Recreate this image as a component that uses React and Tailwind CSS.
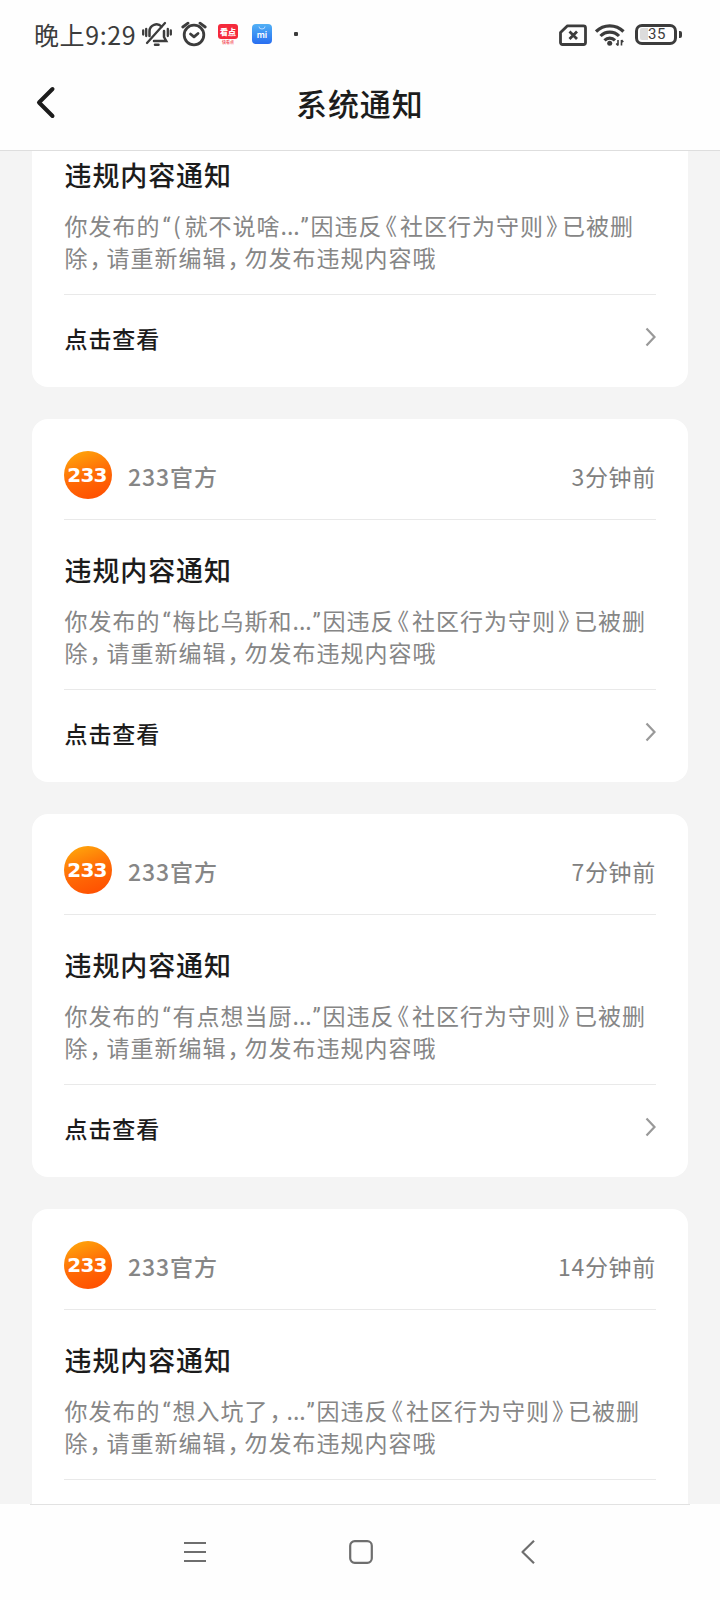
import React from "react";

const notices = [
  { id: 1, time: "1分钟前", quote: "(就不说啥" },
  { id: 2, time: "3分钟前", quote: "梅比乌斯和" },
  { id: 3, time: "7分钟前", quote: "有点想当厨" },
  { id: 4, time: "14分钟前", quote: "想入坑了，" },
];

// narrow widths for punctuation, full-width glyphs are too loose
const punctuation = {
  "“": "inline-block w-[12px] text-center font-['Roboto'] leading-none tracking-normal",
  "”": "inline-block w-[12px] text-center font-['Roboto'] leading-none tracking-normal",
  "(": "inline-block w-[12px] pr-[3px] text-center leading-none tracking-normal",
  "…": "inline-block w-[18px] text-center leading-none tracking-normal",
  "《": "ml-[3px] mr-[2px] [font-feature-settings:'halt']",
  "》": "ml-[2px] mr-[3.5px] [font-feature-settings:'halt']",
  "，": "ml-[1px] mr-[4.5px] [font-feature-settings:'halt']",
};

function Line({ text }) {
  return (
    <p className="h-8 whitespace-nowrap">
      {Array.from(text).map((ch, idx) =>
        punctuation[ch] ? (
          <span key={idx} className={punctuation[ch]}>
            {ch === "…" ? "..." : ch}
          </span>
        ) : (
          ch
        )
      )}
    </p>
  );
}

function StatusBar() {
  return (
    <div className="flex h-[68px] items-center pl-[34px] pr-[38px] text-[#3c3c3c]">
      <span className="w-[108px] whitespace-nowrap text-[25px] leading-[36px] tracking-[0.6px]">晚上9:29</span>

      {/* Muted bell */}
      <svg className="h-[26px] w-[30px]" viewBox="0 0 30 26" fill="none" stroke="currentColor" strokeWidth="2.5" strokeLinecap="round">
        <path d="M7.500 15V10a7 7 0 0 1 12-4.500M22 10v6l2.200 4H12" />
        <path d="M23 2 5 22M1.200 9.500v4M4.200 8v7M25.800 8v7M28.800 9.500v4" strokeWidth="2.300" />
        <path d="M13 23.800h3.500" strokeWidth="2.500" />
      </svg>

      {/* Alarm */}
      <svg className="ml-[9px] h-[26px] w-[26px]" viewBox="0 0 26 26" fill="none" stroke="currentColor" strokeWidth="2.800" strokeLinecap="round" strokeLinejoin="round">
        <circle cx="13" cy="14" r="9.800" />
        <path d="M9.500 13 13 15.800l4-3.300" />
        <path d="M1.800 6 7 2.200M24.200 6 19 2.200" />
      </svg>

      <div className="ml-[11px] flex h-5 w-5 flex-col items-center">
        <span className="flex h-[15px] w-5 items-center justify-center rounded-[3px] bg-[#f52a3c] text-[8px] font-black leading-none text-white">看点</span>
        <span className="mt-[1px] text-[4px] font-bold leading-[4px] text-[#f5606c]">快看点</span>
      </div>

      <div className="ml-[14px] flex h-5 w-5 flex-col items-center rounded-[4px] bg-linear-to-b from-[#52b0f5] to-[#2a6df0]">
        <svg className="mt-[2px] h-[4px] w-[8px]" viewBox="0 0 8 4" fill="none" stroke="#b9dcff" strokeWidth="1">
          <path d="M1 .5a3 2.500 0 0 0 6 0" />
        </svg>
        <span className="font-['Inter'] text-[9px] font-semibold leading-[10px] text-white">mi</span>
      </div>

      <span className="ml-[22px] h-[4px] w-[4px] rounded-[1px] bg-current" />

      <div className="ml-auto flex items-center">
        {/* No SIM */}
        <svg className="mt-[2px] h-[22px] w-[28px]" viewBox="0 0 28 22" fill="none" stroke="currentColor" strokeWidth="2.800" strokeLinejoin="round">
          <path d="M8.500 1.800H24.500a2 2 0 0 1 2 2V18.500a2 2 0 0 1-2 2H3.500a2 2 0 0 1-2-2V8.500z" />
          <path d="m10.500 7.500 7.500 7.500M18 7.500 10.500 15" />
        </svg>

        {/* Wifi */}
        <svg className="ml-[8px] mt-[1px] h-[22px] w-[30px]" viewBox="0 0 30 22" fill="none" stroke="currentColor" strokeWidth="3.200">
          <path d="M1 7.500a19.500 19.500 0 0 1 27.500 0" />
          <path d="M5.500 12a13 13 0 0 1 18.500 0" />
          <path d="M9.500 16.300a7.500 7.500 0 0 1 10.500 0" />
          <circle cx="14.700" cy="19.300" r="2.500" fill="currentColor" stroke="none" />
          <path d="M23 16v5.500m-1.800-2 1.800 2M26.500 21.500V16m1.800 2-1.800-2" strokeWidth="1.600" />
        </svg>

        {/* Battery */}
        <div className="ml-[10px] flex h-[21px] w-[42px] items-center rounded-[7px] border-3 border-current pl-[2px]">
          <span className="h-[12px] w-[8px] rounded-l-[2px] bg-[#dcdcdc]" />
          <span className="font-['Roboto'] text-[15px] leading-none tracking-[0.5px]">35</span>
        </div>
        <span className="ml-[2px] h-[7px] w-[3px] rounded-r-[2px] bg-current" />
      </div>
    </div>
  );
}

function NoticeCard({ time, quote }) {
  return (
    <section className="h-[363px] shrink-0 rounded-[16px] bg-white px-8">
      <div className="flex h-[101px] items-center border-b border-[#e9e9e9] pt-[12px]">
        <div className="flex h-12 w-12 items-center justify-center rounded-full bg-linear-[160deg] from-[#ffae0c] via-[#ff6c06] via-50% to-[#ff4a00]">
          <span className="ml-[-2px] font-['DejaVu_Sans'] text-[20px] font-bold leading-none tracking-[-0.8px] text-white">233</span>
        </div>
        <span className="ml-4 mt-[1px] text-[23px] font-medium leading-8 tracking-[1px] text-[#868686]">
          <span className="tracking-[0.9px]">233</span>官方
        </span>
        <span className="ml-auto mt-[1px] text-[23px] leading-8 tracking-[0.7px] text-[#808080]">{time}</span>
      </div>

      <h2 className="ml-[0.5px] mt-[34px] text-[27px] font-medium leading-8 tracking-[0.9px] text-[#1c1c1c]">违规内容通知</h2>

      <div className="ml-[0.5px] mt-[18px] h-[85px] text-[23px] leading-8 tracking-[1px] text-[#868686]">
        <Line text={`你发布的“${quote}…”因违反《社区行为守则》已被删`} />
        <Line text="除，请重新编辑，勿发布违规内容哦" />
      </div>

      <div className="flex h-[92px] items-center justify-between border-t border-[#e9e9e9]">
        <span className="mb-[5px] ml-[0.5px] text-[23px] font-medium leading-8 tracking-[0.9px] text-[#1c1c1c]">点击查看</span>
        <svg className="mb-[7px] h-[20px] w-[12px]" viewBox="0 0 12 20" fill="none" stroke="#999999" strokeWidth="2.200">
          <path d="m2.500 1.500 8 8.500-8 8.500" />
        </svg>
      </div>
    </section>
  );
}

function NavBar() {
  return (
    <nav className="h-24 bg-[#fefefe] text-[#6e6e6e]">
      <div className="mx-[30px] h-px bg-[#e2e2e2]" />
      <div className="flex pl-[183px] pt-[35px]">
        <svg className="h-6 w-6" viewBox="0 0 24 24" stroke="currentColor" strokeWidth="2">
          <path d="M1 3h22M1 12h22M1 21h22" />
        </svg>
        <svg className="ml-[142px] h-6 w-6" viewBox="0 0 24 24" fill="none" stroke="currentColor" strokeWidth="2.200">
          <rect x="1.200" y="1.200" width="21.600" height="21.600" rx="4.500" />
        </svg>
        <svg className="ml-[147px] h-6 w-[16px]" viewBox="0 0 16 24" fill="none" stroke="currentColor" strokeWidth="2.200" strokeLinejoin="round">
          <path d="M14 .8 2.500 12 14 23.200" />
        </svg>
      </div>
    </nav>
  );
}

function App() {
  return (
    <div className="flex h-[1600px] w-[720px] flex-col overflow-hidden bg-[#f4f4f4] font-['Noto_Sans_CJK_SC',sans-serif]">
      <header className="h-[151px] shrink-0 border-b border-[#dedede] bg-[#fefefe]">
        <StatusBar />
        <div className="flex h-[68px] items-center pl-[34px]">
          <svg className="h-[34px] w-[22px]" viewBox="0 0 22 34" fill="none" stroke="#1c1c1c" strokeWidth="4" strokeLinecap="round" strokeLinejoin="round">
            <path d="M18.500 4 5 17.500 18.500 31" />
          </svg>
          <h1 className="ml-[240px] mt-[2px] text-[31px] font-medium leading-10 tracking-[0.9px] text-[#1c1c1c]">系统通知</h1>
        </div>
      </header>

      <main className="min-h-0 flex-1 overflow-hidden px-8">
        <div className="mt-[-127px] flex flex-col gap-8">
          {notices.map((item) => (
            <NoticeCard key={item.id} time={item.time} quote={item.quote} />
          ))}
        </div>
      </main>

      <NavBar />
    </div>
  );
}

export default App;
